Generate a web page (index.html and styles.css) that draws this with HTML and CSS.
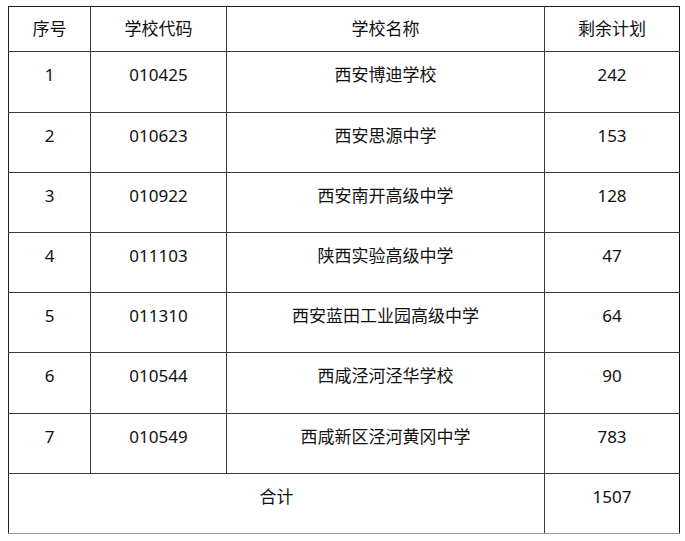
FILE: index.html
```html
<!DOCTYPE html>
<html lang="zh-CN">
<head>
<meta charset="utf-8">
<title>剩余计划</title>
<link rel="stylesheet" href="styles.css">
</head>
<body>
<table class="plan">
  <colgroup>
    <col class="c-no">
    <col class="c-code">
    <col class="c-name">
    <col class="c-plan">
  </colgroup>
  <thead>
    <tr><th>序号</th><th>学校代码</th><th>学校名称</th><th>剩余计划</th></tr>
  </thead>
  <tbody>
    <tr class="tall"><td>1</td><td>010425</td><td>西安博迪学校</td><td>242</td></tr>
    <tr><td>2</td><td>010623</td><td>西安思源中学</td><td>153</td></tr>
    <tr><td>3</td><td>010922</td><td>西安南开高级中学</td><td>128</td></tr>
    <tr><td>4</td><td>011103</td><td>陕西实验高级中学</td><td>47</td></tr>
    <tr><td>5</td><td>011310</td><td>西安蓝田工业园高级中学</td><td>64</td></tr>
    <tr class="tall"><td>6</td><td>010544</td><td>西咸泾河泾华学校</td><td>90</td></tr>
    <tr><td>7</td><td>010549</td><td>西咸新区泾河黄冈中学</td><td>783</td></tr>
    <tr class="total"><td colspan="3">合计</td><td>1507</td></tr>
  </tbody>
</table>
</body>
</html>
```
FILE: styles.css
```css
html, body {
  margin: 0;
  padding: 0;
  background: #ffffff;
}
body {
  padding: 6px 0 0 8px;
  font-family: "Noto Sans", "Noto Sans CJK SC", sans-serif;
  color: #111111;
}
.plan {
  border-collapse: collapse;
  table-layout: fixed;
  width: 671px;
  font-size: 17px;
  line-height: 24px;
}
.c-no { width: 82px; }
.c-code { width: 136px; }
.c-name { width: 318px; }
.c-plan { width: 135px; }
.plan th,
.plan td {
  border: 1px solid #3a3a3a;
  text-align: center;
  padding: 0;
  font-weight: normal;
}
.plan th {
  height: 44px;
  vertical-align: middle;
  border-top-color: #1a1a1a;
}
.plan td {
  height: 60px;
  vertical-align: top;
  padding-top: 11px;
  box-sizing: border-box;
}
.plan .tall td {
  height: 61px;
}
.plan tbody tr td {
  border-top-color: #666;
}
.plan .total td {
  border-top-color: #111;
  border-bottom-color: #999;
}
.plan tr > :last-child {
  border-right-color: #111;
}
.plan tr > :first-child {
  border-left-color: #222;
}
```
